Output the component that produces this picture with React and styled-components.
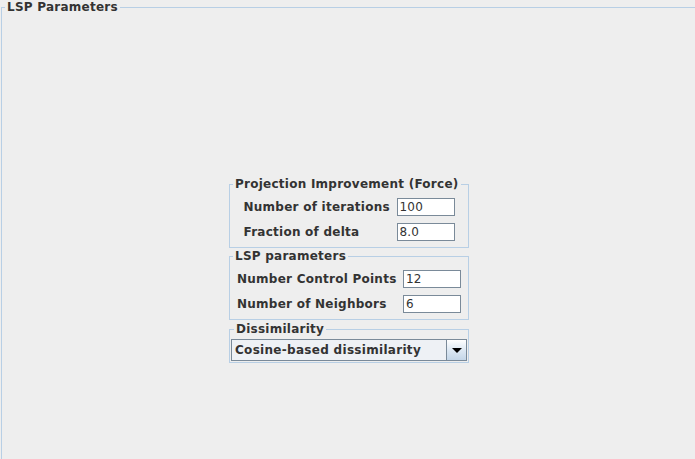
import React from 'react'
import styled, { createGlobalStyle } from 'styled-components'

const GlobalStyle = createGlobalStyle`
  html, body {
    margin: 0;
    padding: 0;
    background: #eeeeee;
    overflow: hidden;
  }
  * {
    box-sizing: border-box;
  }
  body {
    font-family: 'DejaVu Sans', 'Liberation Sans', sans-serif;
    font-size: 12px;
    color: #333333;
  }
`

const Frame = styled.fieldset`
  margin: 0 0 0 1px;
  padding: 0;
  height: 459px;
  border: 1px solid #b8cfe5;
  border-right: none;
  border-bottom: none;
  min-width: 0;
`

const Title = styled.legend`
  margin-left: 3px;
  padding: 0 2px;
  font-weight: bold;
  font-size: 12px;
  line-height: 14px;
  letter-spacing: 0.25px;
  color: #333333;
`

const Column = styled.div`
  display: flex;
  flex-direction: column;
  width: 240px;
  margin: 163px 0 0 227px;
`

const Group = styled.fieldset`
  margin: ${(p) => p.$top || 0}px 0 0 0;
  padding: ${(p) => p.$pad || '7px 0 6px 0'};
  border: 1px solid #b8cfe5;
  min-width: 0;
`

const Rows = styled.div`
  display: flex;
  flex-direction: column;
  align-items: center;
  gap: 7px;
`

const Row = styled.div`
  display: flex;
  align-items: center;
  height: 18px;
`

const Label = styled.span`
  width: ${(p) => p.$width}px;
  font-weight: bold;
  letter-spacing: 0.25px;
  white-space: nowrap;
`

const Field = styled.input`
  width: 58px;
  height: 18px;
  margin: 0;
  padding: 0 2px;
  border: 1px solid #7a8a99;
  background: #ffffff;
  font-family: 'DejaVu Sans', sans-serif;
  font-size: 12px;
  letter-spacing: 0.2px;
  color: #333333;
  outline: none;
`

const Combo = styled.div`
  display: flex;
  height: 22px;
  border: 1px solid #7a8a99;
  background: #eef1f5;
`

const ComboText = styled.span`
  flex: 1;
  display: flex;
  align-items: center;
  padding-left: 3px;
  font-weight: bold;
  letter-spacing: 0.3px;
  white-space: nowrap;
`

const ArrowButton = styled.div`
  width: 20px;
  display: flex;
  align-items: center;
  justify-content: center;
  border-left: 1px solid #7a8a99;
  background: linear-gradient(#ffffff, #dde8f3 50%, #c4d6e8);
`

const params = [
  {
    title: 'Projection Improvement (Force)',
    labelWidth: 153,
    rows: [
      ['Number of iterations', '100'],
      ['Fraction of delta', '8.0'],
    ],
  },
  {
    title: 'LSP parameters',
    labelWidth: 166,
    rows: [
      ['Number Control Points', '12'],
      ['Number of Neighbors', '6'],
    ],
  },
]

export default function App() {
  return (
    <>
      <GlobalStyle />
      <Frame>
        <Title>LSP Parameters</Title>
        <Column>
          {params.map((group, i) => (
            <Group key={group.title} $top={i === 0 ? 0 : 1}>
              <Title>{group.title}</Title>
              <Rows>
                {group.rows.map(([label, value]) => (
                  <Row key={label}>
                    <Label $width={group.labelWidth}>{label}</Label>
                    <Field defaultValue={value} />
                  </Row>
                ))}
              </Rows>
            </Group>
          ))}
          <Group $top={2} $pad="3px 1px 1px 1px">
            <Title>Dissimilarity</Title>
            <Combo>
              <ComboText>Cosine-based dissimilarity</ComboText>
              <ArrowButton>
                <svg width="10" height="5" viewBox="0 0 10 5">
                  <path d="M0 0H10L5 5Z" fill="#000" />
                </svg>
              </ArrowButton>
            </Combo>
          </Group>
        </Column>
      </Frame>
    </>
  )
}
